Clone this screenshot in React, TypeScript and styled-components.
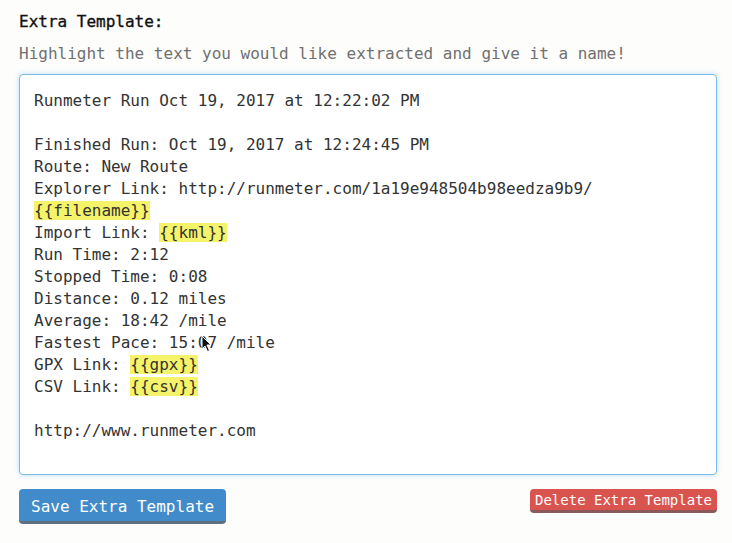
import styled, { createGlobalStyle } from "styled-components";

const GlobalStyle = createGlobalStyle`
  body {
    margin: 0;
    background: #fdfdfc;
    font-family: "DejaVu Sans Mono", "Liberation Mono", monospace;
    color: #333;
  }
`;

const Page = styled.div`
  width: 698px;
  padding: 11px 0 0 19px;
`;

const Title = styled.label`
  display: block;
  font-size: 16px;
  line-height: 22px;
  font-weight: normal;
  color: #111;
  -webkit-text-stroke: 0.35px #111;
`;

const Hint = styled.p`
  margin: 10px 0 0;
  font-size: 16px;
  line-height: 22px;
  color: #707070;
`;

const Editor = styled.div`
  position: relative;
  margin-top: 9px;
  height: 370px;
  padding: 15px 14px 14px 14px;
  border: 1px solid #7fbbe8;
  border-radius: 4px;
  background: #fff;
  box-shadow: 0 0 5px rgba(102, 175, 233, 0.45);
  font-size: 16px;
  line-height: 22px;
  color: #333;
  white-space: pre;
`;

const Line = styled.div`
  height: 22px;
`;

const Tag = styled.span`
  background: #f5f36a;
`;

const Cursor = styled.svg`
  position: absolute;
  left: 181px;
  top: 260px;
`;

const Actions = styled.div`
  display: flex;
  justify-content: space-between;
  align-items: flex-start;
  margin-top: 14px;
`;

const Button = styled.button<{ $tone: "primary" | "danger"; $small?: boolean }>`
  font-family: "DejaVu Sans Mono", "Liberation Mono", monospace;
  font-size: ${(p) => (p.$small ? "14px" : "16px")};
  line-height: ${(p) => (p.$small ? "20px" : "29px")};
  padding: ${(p) => (p.$small ? "1px 5px 0" : "3px 12px 0")};
  color: #fff;
  border: none;
  border-radius: 4px;
  background: ${(p) => (p.$tone === "primary" ? "#428bca" : "#d9534f")};
  border-bottom: 3px solid ${(p) => (p.$tone === "primary" ? "#5f6f80" : "#8a5a5a")};
  cursor: pointer;
`;

const lines: React.ReactNode[] = [
  "Runmeter Run Oct 19, 2017 at 12:22:02 PM",
  "",
  "Finished Run: Oct 19, 2017 at 12:24:45 PM",
  "Route: New Route",
  "Explorer Link: http://runmeter.com/1a19e948504b98eedza9b9/",
  <Tag>{"{{filename}}"}</Tag>,
  <>Import Link: <Tag>{"{{kml}}"}</Tag></>,
  "Run Time: 2:12",
  "Stopped Time: 0:08",
  "Distance: 0.12 miles",
  "Average: 18:42 /mile",
  "Fastest Pace: 15:07 /mile",
  <>GPX Link: <Tag>{"{{gpx}}"}</Tag></>,
  <>CSV Link: <Tag>{"{{csv}}"}</Tag></>,
  "",
  "http://www.runmeter.com",
];

export default function App() {
  return (
    <>
      <GlobalStyle />
      <Page>
        <Title>Extra Template:</Title>
        <Hint>Highlight the text you would like extracted and give it a name!</Hint>
        <Editor>
          {lines.map((line, i) => (
            <Line key={i}>{line}</Line>
          ))}
          <Cursor width="12" height="18" viewBox="0 0 12 18">
            <path
              d="M1 1 L1 14 L4 11 L6.5 16.5 L8.5 15.5 L6 10 L10 10 Z"
              fill="#111"
              stroke="#fff"
              strokeWidth="1"
            />
          </Cursor>
        </Editor>
        <Actions>
          <Button $tone="primary">Save Extra Template</Button>
          <Button $tone="danger" $small>
            Delete Extra Template
          </Button>
        </Actions>
      </Page>
    </>
  );
}
